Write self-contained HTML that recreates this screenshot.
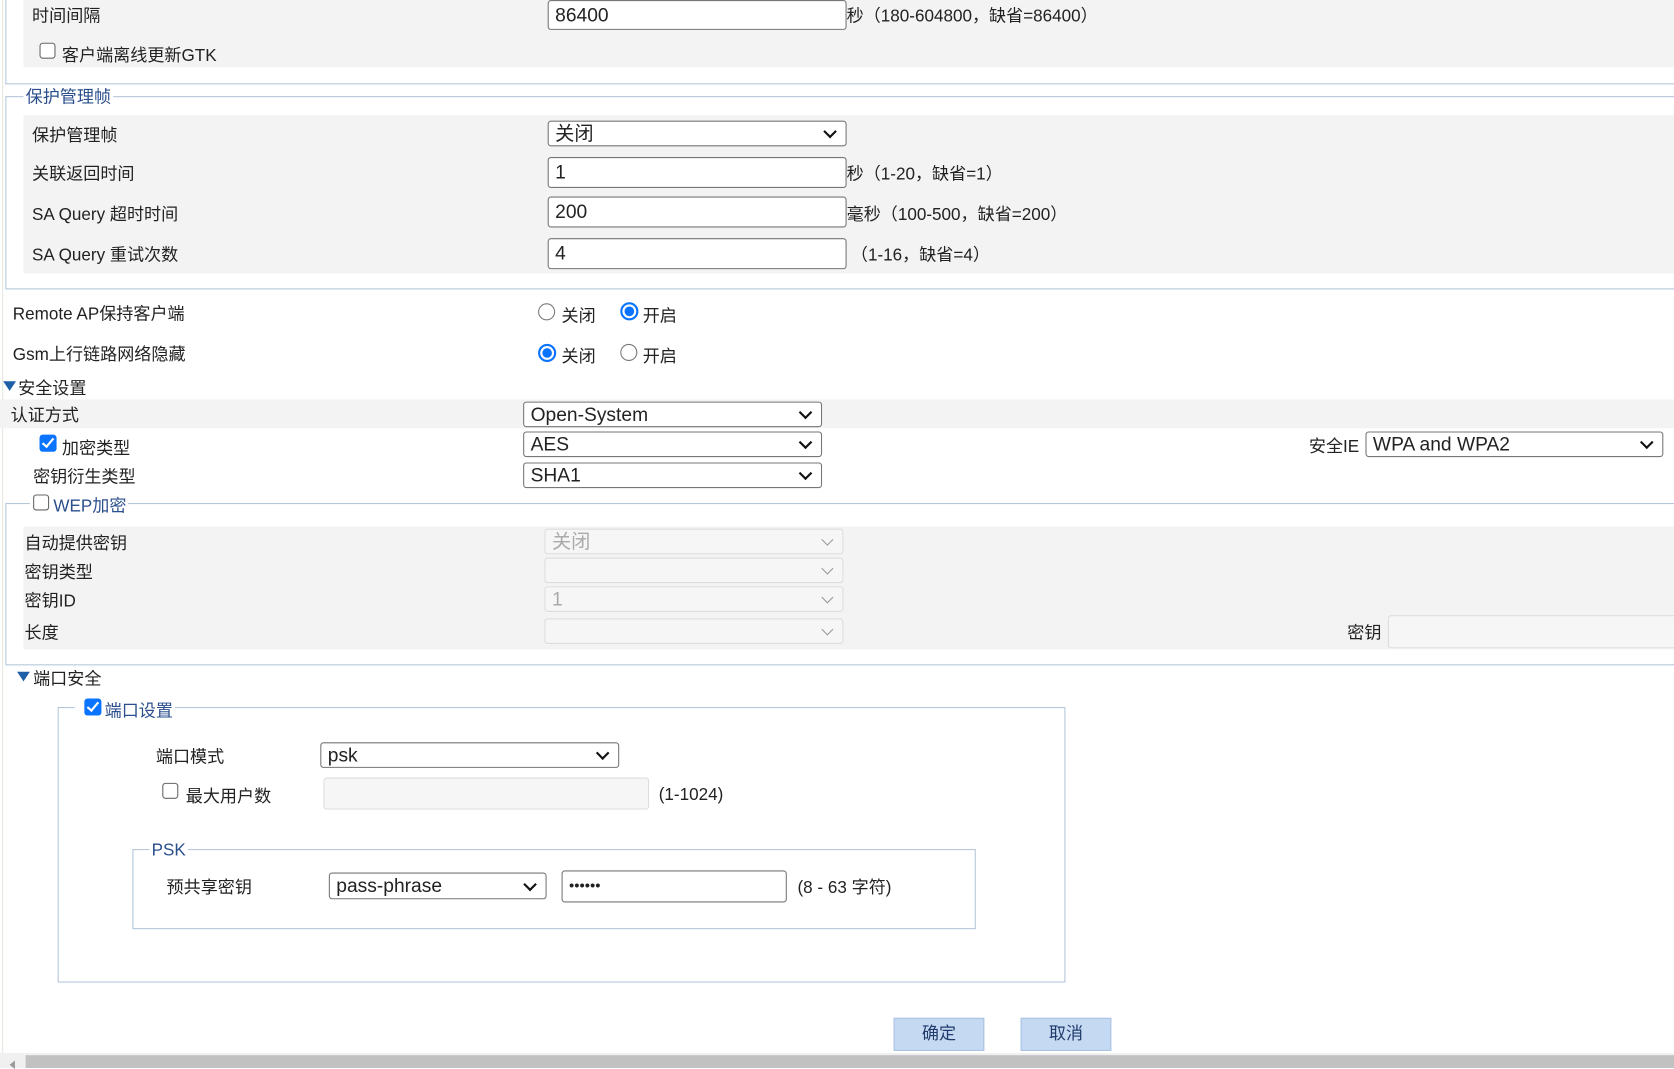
<!DOCTYPE html>
<html><head><meta charset="utf-8"><style>
*{box-sizing:border-box;margin:0;padding:0}
html,body{width:1674px;height:1068px;overflow:hidden;background:#fff}
#w{position:absolute;left:0;top:0;width:1568px;height:1000px;transform:scale(1.06760,1.068);transform-origin:0 0;font-family:"Liberation Sans","Noto Sans CJK SC",sans-serif;font-size:16px;color:#222}
#w div,#w span{position:absolute}
.t{white-space:nowrap;line-height:20px;margin-top:2px}
.g{background:#f3f3f3}
.in{background:#fff;border:1px solid #767676;border-radius:3px;padding-left:6px;line-height:26px;font-size:18px;white-space:nowrap}
.sel{background:#fff;border:1px solid #767676;border-radius:3px;padding-left:6px;font-size:18px;white-space:nowrap}
.sel:after{content:"";position:absolute;right:10px;top:50%;width:7px;height:7px;border-right:2px solid #111;border-bottom:2px solid #111;transform:translateY(-70%) rotate(45deg)}
.dis{background:#f6f6f6;border:1px solid #ddd;border-radius:3px;color:#aaa;padding-left:6px;font-size:18px}
.dis:after{content:"";position:absolute;right:10px;top:50%;width:7px;height:7px;border-right:1px solid #999;border-bottom:1px solid #999;transform:translateY(-70%) rotate(45deg)}
.fs{border:1px solid #b3c6d9}
.lg{background:#fff;color:#2b4f8c;padding:0 2px;line-height:20px;white-space:nowrap;margin-top:2px}
.cb{width:15px;height:15px;border:1px solid #666;border-radius:3px;background:#fff}
.cbc{width:16px;height:16px;border-radius:3px;background:#0b74ff}
.cbc:after{content:"";position:absolute;left:5px;top:1px;width:4px;height:9px;border-right:2px solid #fff;border-bottom:2px solid #fff;transform:rotate(40deg)}
.r{width:16px;height:16px;border:1px solid #777;border-radius:50%;background:#fff}
.rc{width:17px;height:17px;border:2px solid #0b74ff;border-radius:50%;background:#fff}
.rc:after{content:"";position:absolute;left:2px;top:2px;width:9px;height:9px;border-radius:50%;background:#0b74ff}
.tri{width:0;height:0;border-left:6px solid transparent;border-right:6px solid transparent;border-top:9px solid #1e5fa8}
.btn{background:#c6d9f3;border:1px solid #a9c1e2;color:#1f3b6a;text-align:center;line-height:29px}
</style></head><body><div id="w">
<div style="left:2px;top:0;width:1px;height:990px;background:#e4e6dc"></div>
<div class="fs" style="left:5px;top:-2px;width:1570px;height:81px;border-top:none"></div>
<div class="g" style="left:22px;top:0;width:1546px;height:63px"></div>
<span class="t" style="left:30px;top:4px">时间间隔</span>
<div class="in" style="left:513px;top:0;width:280px;height:28px">86400</div>
<span class="t" style="left:793px;top:4px">秒（180-604800，缺省=86400）</span>
<div class="cb" style="left:37px;top:40px"></div>
<span class="t" style="left:58px;top:41px">客户端离线更新GTK</span>
<div class="fs" style="left:5px;top:90px;width:1570px;height:181px"></div>
<span class="lg" style="left:22px;top:80px">保护管理帧</span>
<div class="g" style="left:22px;top:108px;width:1546px;height:148px"></div>
<span class="t" style="left:30px;top:116px">保护管理帧</span>
<div class="sel" style="left:513px;top:113px;width:280px;height:24px;line-height:22px">关闭</div>
<span class="t" style="left:30px;top:152px">关联返回时间</span>
<div class="in" style="left:513px;top:147px;width:280px;height:29px">1</div>
<span class="t" style="left:793px;top:152px">秒（1-20，缺省=1）</span>
<span class="t" style="left:30px;top:190px">SA Query 超时时间</span>
<div class="in" style="left:513px;top:184px;width:280px;height:29px">200</div>
<span class="t" style="left:793px;top:190px">毫秒（100-500，缺省=200）</span>
<span class="t" style="left:30px;top:228px">SA Query 重试次数</span>
<div class="in" style="left:513px;top:223px;width:280px;height:29px">4</div>
<span class="t" style="left:797px;top:228px">（1-16，缺省=4）</span>
<span class="t" style="left:12px;top:283px">Remote AP保持客户端</span>
<div class="r" style="left:504px;top:284px"></div><span class="t" style="left:526px;top:285px">关闭</span>
<div class="rc" style="left:581px;top:283px"></div><span class="t" style="left:602px;top:285px">开启</span>
<span class="t" style="left:12px;top:321px">Gsm上行链路网络隐藏</span>
<div class="rc" style="left:504px;top:322px"></div><span class="t" style="left:526px;top:323px">关闭</span>
<div class="r" style="left:581px;top:322px"></div><span class="t" style="left:602px;top:323px">开启</span>
<div class="tri" style="left:3px;top:357px"></div>
<span class="t" style="left:17px;top:353px">安全设置</span>
<div class="g" style="left:0;top:374px;width:1568px;height:27px"></div>
<span class="t" style="left:10px;top:378px">认证方式</span>
<div class="sel" style="left:490px;top:376px;width:280px;height:24px;line-height:22px">Open-System</div>
<div class="cbc" style="left:37px;top:407px"></div>
<span class="t" style="left:58px;top:409px">加密类型</span>
<div class="sel" style="left:490px;top:404px;width:280px;height:24px;line-height:22px">AES</div>
<span class="t" style="left:1226px;top:407px">安全IE</span>
<div class="sel" style="left:1279px;top:404px;width:279px;height:24px;line-height:22px">WPA and WPA2</div>
<span class="t" style="left:31px;top:436px">密钥衍生类型</span>
<div class="sel" style="left:490px;top:433px;width:280px;height:24px;line-height:22px">SHA1</div>
<div class="fs" style="left:5px;top:471px;width:1570px;height:152px"></div>
<span class="lg" style="left:28px;top:463px;padding-left:22px">WEP加密</span>
<div class="cb" style="left:31px;top:463px"></div>
<div class="g" style="left:22px;top:493px;width:1546px;height:115px"></div>
<span class="t" style="left:23px;top:498px">自动提供密钥</span>
<div class="dis" style="left:510px;top:495px;width:280px;height:24px;line-height:22px">关闭</div>
<span class="t" style="left:23px;top:525px">密钥类型</span>
<div class="dis" style="left:510px;top:522px;width:280px;height:24px"></div>
<span class="t" style="left:23px;top:552px">密钥ID</span>
<div class="dis" style="left:510px;top:549px;width:280px;height:24px;line-height:22px">1</div>
<span class="t" style="left:23px;top:582px">长度</span>
<div class="dis" style="left:510px;top:579px;width:280px;height:24px"></div>
<span class="t" style="left:1262px;top:582px">密钥</span>
<div style="left:1300px;top:576px;width:280px;height:31px;background:#f6f6f6;border:1px solid #ddd;border-radius:3px"></div>
<div class="tri" style="left:16px;top:629px"></div>
<span class="t" style="left:31px;top:625px">端口安全</span>
<div class="fs" style="left:54px;top:662px;width:944px;height:258px"></div>
<span class="lg" style="left:70px;top:655px;padding-left:28px">端口设置</span>
<div class="cbc" style="left:79px;top:654px"></div>
<span class="t" style="left:146px;top:698px">端口模式</span>
<div class="sel" style="left:300px;top:695px;width:280px;height:24px;line-height:22px">psk</div>
<div class="cb" style="left:152px;top:733px"></div>
<span class="t" style="left:174px;top:735px">最大用户数</span>
<div style="left:303px;top:728px;width:305px;height:30px;background:#f6f6f6;border:1px solid #ddd;border-radius:3px"></div>
<span class="t" style="left:617px;top:733px">(1-1024)</span>
<div class="fs" style="left:124px;top:795px;width:790px;height:75px"></div>
<span class="lg" style="left:140px;top:785px">PSK</span>
<span class="t" style="left:156px;top:820px">预共享密钥</span>
<div class="sel" style="left:308px;top:817px;width:204px;height:25px;line-height:23px">pass-phrase</div>
<div class="in" style="left:526px;top:815px;width:211px;height:30px;font-size:14px;line-height:26px">••••••</div>
<span class="t" style="left:747px;top:820px">(8 - 63 字符)</span>
<div class="btn" style="left:837px;top:953px;width:85px;height:31px">确定</div>
<div class="btn" style="left:956px;top:953px;width:85px;height:31px">取消</div>
<div style="left:0;top:986px;width:1568px;height:14px;background:#f0f0f0"></div>
<div style="left:24px;top:988px;width:1544px;height:12px;background:#c1c1c1"></div>
<div style="left:9px;top:993px;width:0;height:0;border-top:4px solid transparent;border-bottom:4px solid transparent;border-right:5px solid #999"></div>
</div></body></html>
